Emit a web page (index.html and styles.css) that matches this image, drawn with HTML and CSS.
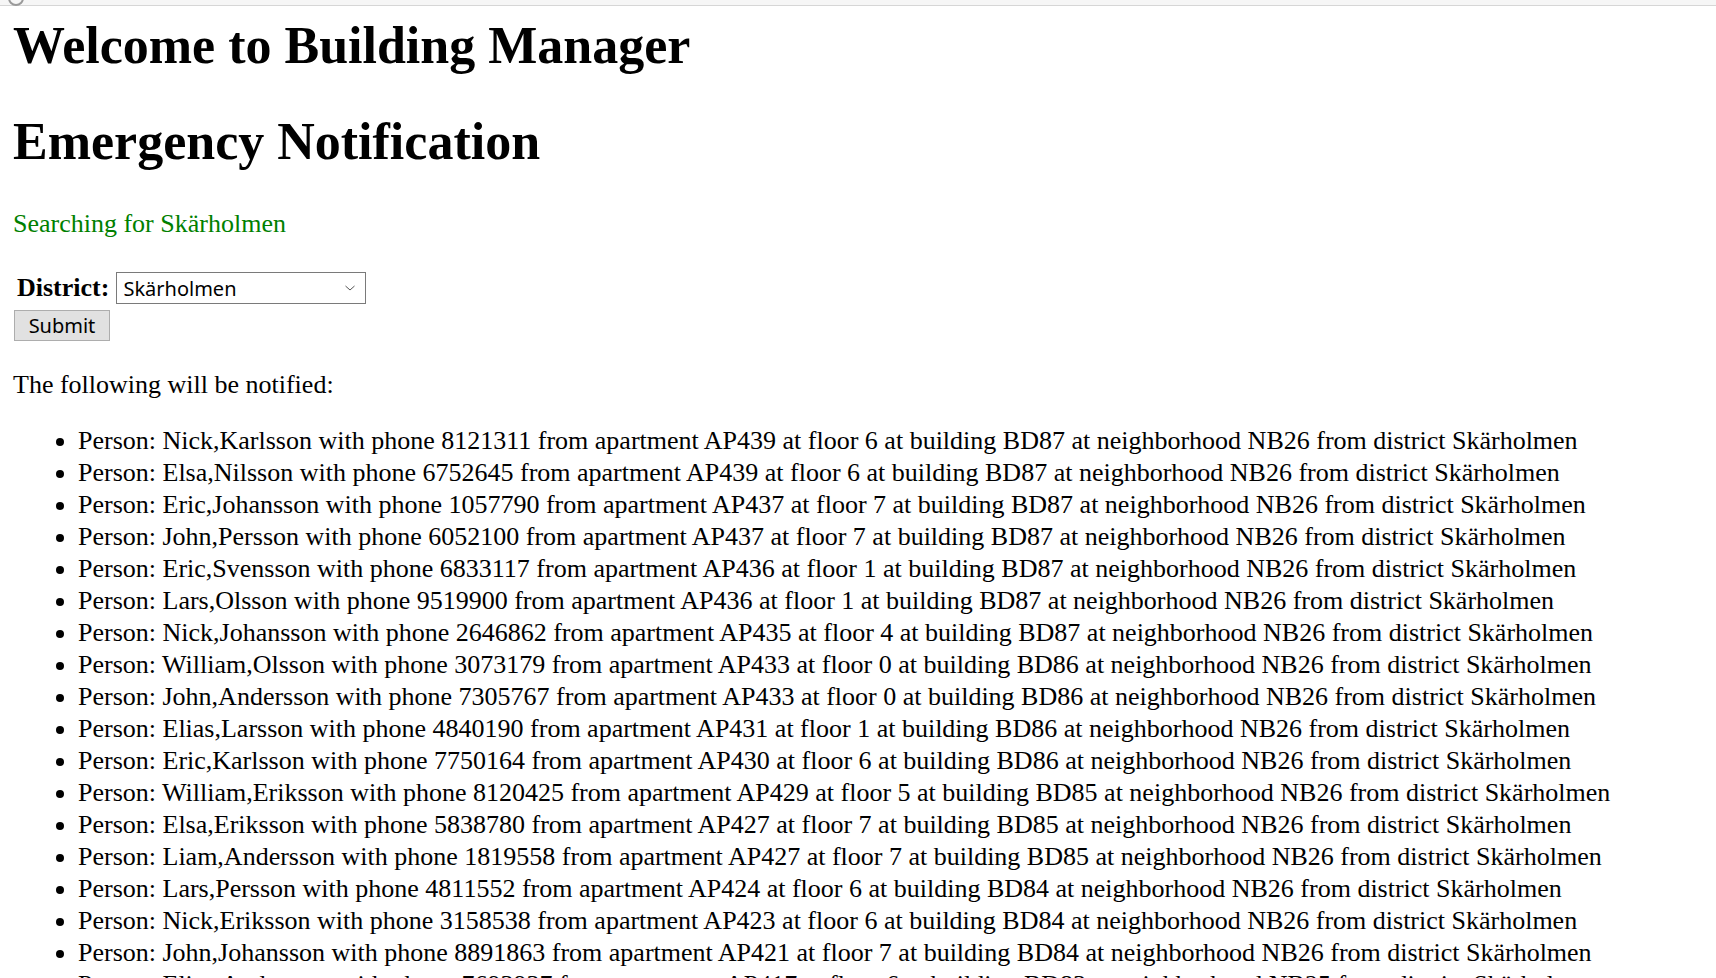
FILE: index.html
```html
<!DOCTYPE html>
<html lang="en">
<head>
<meta charset="utf-8">
<title>Building Manager</title>
<link rel="stylesheet" href="styles.css">
</head>
<body>
<div class="chrome"><span class="chrome-dot"></span></div>
<main class="page">
  <h1 class="title">Welcome to Building Manager</h1>
  <h1 class="title">Emergency Notification</h1>
  <p class="status">Searching for Skärholmen</p>
  <form class="search-form">
    <table class="form-table">
      <tr>
        <th class="form-label"><label for="district">District:</label></th>
        <td>
          <div class="select">
            <span class="select-value">Skärholmen</span>
            <svg class="select-chevron" width="12" height="8" viewBox="0 0 12 8"><path d="M1.5 2 L6 6 L10.5 2" fill="none" stroke="#555" stroke-width="1"/></svg>
          </div>
        </td>
      </tr>
    </table>
    <button type="button" class="submit">Submit</button>
  </form>
  <p class="intro">The following will be notified:</p>
  <ul class="people">
    <li>Person: Nick,Karlsson with phone 8121311 from apartment AP439 at floor 6 at building BD87 at neighborhood NB26 from district Skärholmen</li>
    <li>Person: Elsa,Nilsson with phone 6752645 from apartment AP439 at floor 6 at building BD87 at neighborhood NB26 from district Skärholmen</li>
    <li>Person: Eric,Johansson with phone 1057790 from apartment AP437 at floor 7 at building BD87 at neighborhood NB26 from district Skärholmen</li>
    <li>Person: John,Persson with phone 6052100 from apartment AP437 at floor 7 at building BD87 at neighborhood NB26 from district Skärholmen</li>
    <li>Person: Eric,Svensson with phone 6833117 from apartment AP436 at floor 1 at building BD87 at neighborhood NB26 from district Skärholmen</li>
    <li>Person: Lars,Olsson with phone 9519900 from apartment AP436 at floor 1 at building BD87 at neighborhood NB26 from district Skärholmen</li>
    <li>Person: Nick,Johansson with phone 2646862 from apartment AP435 at floor 4 at building BD87 at neighborhood NB26 from district Skärholmen</li>
    <li>Person: William,Olsson with phone 3073179 from apartment AP433 at floor 0 at building BD86 at neighborhood NB26 from district Skärholmen</li>
    <li>Person: John,Andersson with phone 7305767 from apartment AP433 at floor 0 at building BD86 at neighborhood NB26 from district Skärholmen</li>
    <li>Person: Elias,Larsson with phone 4840190 from apartment AP431 at floor 1 at building BD86 at neighborhood NB26 from district Skärholmen</li>
    <li>Person: Eric,Karlsson with phone 7750164 from apartment AP430 at floor 6 at building BD86 at neighborhood NB26 from district Skärholmen</li>
    <li>Person: William,Eriksson with phone 8120425 from apartment AP429 at floor 5 at building BD85 at neighborhood NB26 from district Skärholmen</li>
    <li>Person: Elsa,Eriksson with phone 5838780 from apartment AP427 at floor 7 at building BD85 at neighborhood NB26 from district Skärholmen</li>
    <li>Person: Liam,Andersson with phone 1819558 from apartment AP427 at floor 7 at building BD85 at neighborhood NB26 from district Skärholmen</li>
    <li>Person: Lars,Persson with phone 4811552 from apartment AP424 at floor 6 at building BD84 at neighborhood NB26 from district Skärholmen</li>
    <li>Person: Nick,Eriksson with phone 3158538 from apartment AP423 at floor 6 at building BD84 at neighborhood NB26 from district Skärholmen</li>
    <li>Person: John,Johansson with phone 8891863 from apartment AP421 at floor 7 at building BD84 at neighborhood NB26 from district Skärholmen</li>
    <li>Person: Elias,Andersson with phone 7693937 from apartment AP417 at floor 6 at building BD83 at neighborhood NB25 from district Skärholmen</li>
    <li>Person: Lars,Nilsson with phone 5512078 from apartment AP417 at floor 6 at building BD83 at neighborhood NB25 from district Skärholmen</li>
  </ul>
</main>
</body>
</html>
```
FILE: styles.css
```css
html, body {
  margin: 0;
  padding: 0;
  background: #ffffff;
}

body {
  font-family: "Liberation Serif", "Times New Roman", serif;
  font-size: 26px;
  color: #000000;
  overflow: hidden;
}

.chrome {
  height: 5px;
  background: #f6f6f6;
  border-bottom: 1px solid #d6d6d6;
  position: relative;
}

.chrome-dot {
  position: absolute;
  left: 8px;
  top: -10px;
  width: 12px;
  height: 12px;
  border: 2px solid #9a9a9a;
  border-radius: 50%;
}

.page {
  padding: 10px 13px 0 13px;
}

.title {
  font-size: 52px;
  font-weight: bold;
  margin: 0 0 36px 0;
  line-height: 60px;
}

.status {
  color: #008000;
  margin: 0 0 28px 0;
  line-height: 30px;
  padding-top: 1px;
}

.search-form {
  margin: 0;
}

.form-table {
  border-spacing: 3px;
  margin-left: -1px;
}

.form-label {
  font-weight: bold;
  text-align: left;
  padding: 2px;
  font-size: 26px;
}

.form-table td {
  padding: 2px;
}

.select {
  display: flex;
  align-items: center;
  justify-content: space-between;
  height: 30px;
  border: 1px solid #7a7a7a;
  background: #ffffff;
  padding: 0 9px 0 6px;
  box-sizing: content-box;
  width: 233px;
}

.select-value {
  font-family: "Noto Sans", "Open Sans", sans-serif;
  font-size: 20px;
  color: #000;
}

.select-chevron {
  display: block;
}

.submit {
  display: block;
  font-family: "Noto Sans", "Open Sans", sans-serif;
  font-size: 20px;
  color: #000;
  background: #e1e1e1;
  border: 1px solid #adadad;
  width: 96px;
  height: 31px;
  padding: 0;
  margin: 1px 0 0 1px;
  line-height: 28px;
}

.intro {
  margin: 29px 0 25px 0;
  line-height: 30px;
}

.people {
  margin: 0;
  padding-left: 65px;
}

.people li {
  line-height: 32px;
  white-space: nowrap;
}
```
